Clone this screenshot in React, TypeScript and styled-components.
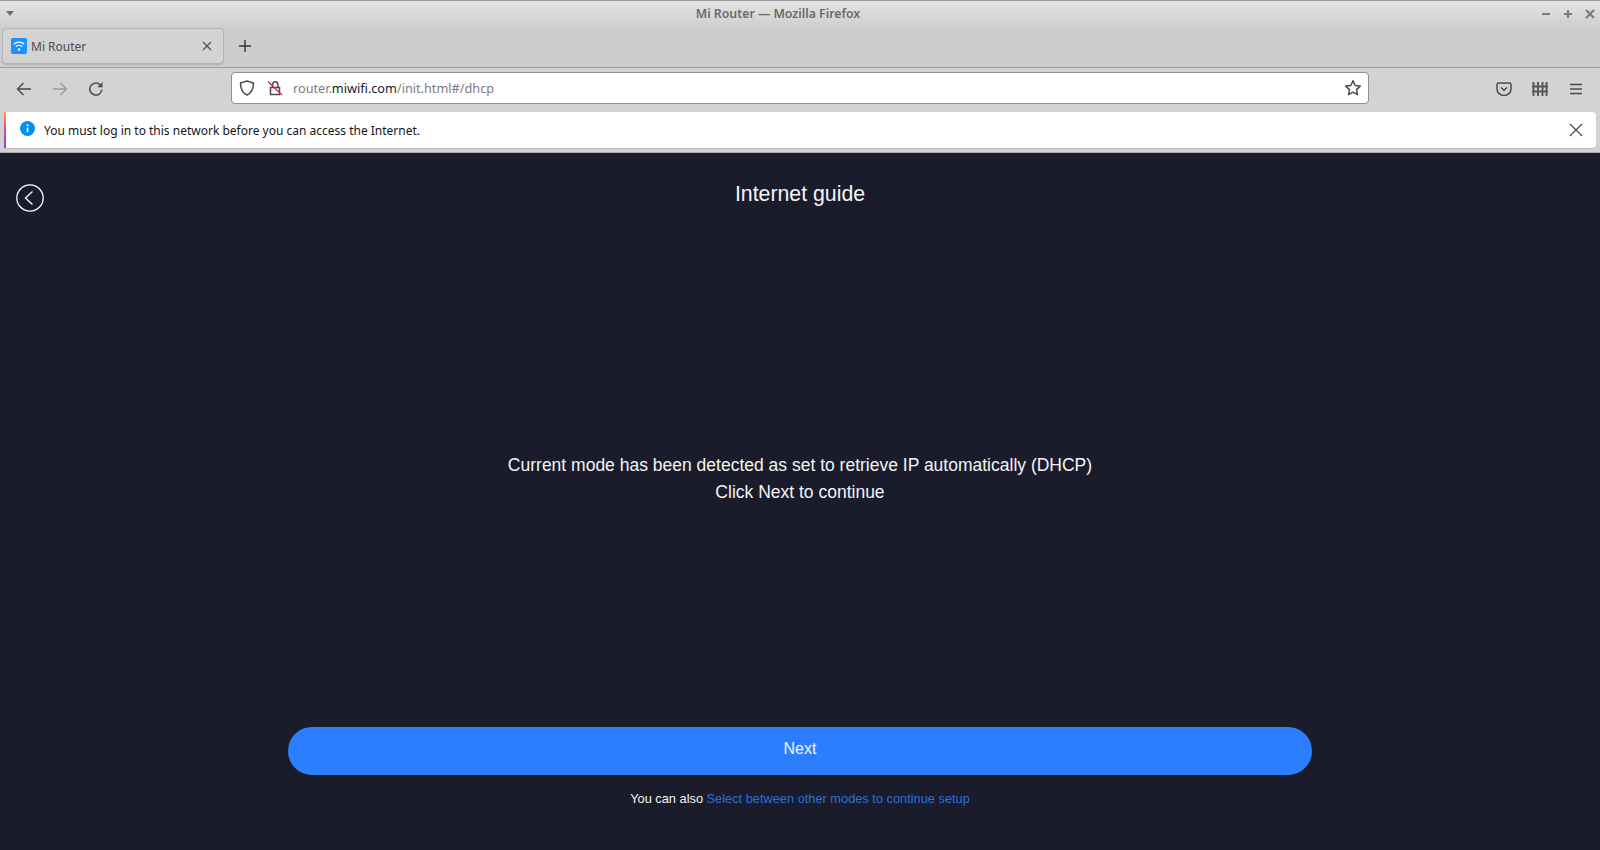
import React from "react";
import styled, { createGlobalStyle } from "styled-components";

const Global = createGlobalStyle`
  html, body { margin: 0; padding: 0; height: 100%; background: #1a1c2b; overflow: hidden; }
  #root { height: 100%; }
  * { box-sizing: border-box; }
`;

const Shell = styled.div`
  width: 1600px; height: 850px; display: flex; flex-direction: column;
  font-family: "Noto Sans", sans-serif;
`;

const TitleBar = styled.div`
  height: 27px; flex: none; display: flex; align-items: center; justify-content: space-between;
  padding: 0 3px 0 5px; border-top: 1px solid #9c9c9c;
  background: linear-gradient(#e4e4e4, #cfcfcf);
  position: relative;
`;
const TitleText = styled.div`
  position: absolute; left: 0; right: 44px; top: 4px; text-align: center;
  font-size: 12.3px; line-height: 18px; font-weight: 600; color: #6a6a6a;
`;
const WindowButtons = styled.div`
  display: flex; gap: 8px; align-items: center; color: #6e6e6e;
`;

const TabStrip = styled.div`
  height: 41px; flex: none; display: flex; align-items: flex-start; padding: 1px 0 0 2px;
  background: #cdcdcd; border-bottom: 1px solid #9f9f9f;
`;
const Tab = styled.div`
  width: 222px; height: 36px; display: flex; align-items: center; gap: 4px;
  padding: 0 11px 0 8px; background: #d3d3d3; border: 1px solid #b4b4b4; border-radius: 4px;
  box-shadow: 0 1px 1px rgba(0,0,0,.12);
`;
const TabLabel = styled.span`
  flex: 1; font-size: 12px; color: #4a4a4f;
`;
const NewTab = styled.div`
  width: 40px; height: 36px; display: flex; align-items: center; justify-content: center;
  margin-left: 1px;
`;

const Toolbar = styled.div`
  height: 40px; flex: none; display: flex; align-items: center; background: #d3d3d3;
  padding: 0 0 0 6px;
`;
const NavButton = styled.div`
  width: 36px; height: 36px; margin-top: 2px; display: flex; align-items: center; justify-content: center;
`;
const UrlBar = styled.div`
  margin-left: 117px; width: 1138px; height: 32px; display: flex; align-items: center; background: #fff;
  border: 1px solid #8f8f8f; border-radius: 4px; padding: 0 6px 0 7px;
`;
const UrlIcons = styled.div`
  display: flex; align-items: center; gap: 12px; margin-right: 10px;
`;
const UrlText = styled.div`
  flex: 1; font-size: 12.7px; color: #7c7c80;
`;
const UrlHost = styled.span`
  color: #1b1b1f;
`;
const ToolbarRight = styled.div`
  margin-left: 117px; display: flex; align-items: center; gap: 0;
`;

const NoticeWrap = styled.div`
  height: 45px; flex: none; background: #d3d3d3; padding: 4px 4px 5px 4px;
  border-bottom: 1px solid #a8a8a8;
`;
const Notice = styled.div`
  height: 36px; display: flex; align-items: center; background: #fff; border-radius: 0 4px 4px 0;
  position: relative; padding: 0 13px 0 16px;
  box-shadow: 0 1px 1px rgba(0,0,0,.12);
`;
const Stripe = styled.span`
  position: absolute; left: 0; top: 0; bottom: 0; width: 2px;
  background: linear-gradient(#ff9a3c, #e0479e 50%, #7a4be0);
`;
const NoticeText = styled.span`
  flex: 1; font-size: 12px; color: #15141a; margin-left: 9px; padding-top: 1px;
`;

const Page = styled.main`
  flex: 1; position: relative; display: flex; flex-direction: column; align-items: center;
  background: #1a1c2b; color: #f4f4f4; font-family: "Liberation Sans", Arial, sans-serif;
`;
const BackButton = styled.div`
  position: absolute; left: 16px; top: 31px; width: 28px; height: 28px;
`;
const Heading = styled.h1`
  margin: 29px 0 0; font-size: 21.3px; line-height: 24px; font-weight: 400;
`;
const Message = styled.div`
  margin-top: 246px; text-align: center; font-size: 17.5px; line-height: 27px;
`;
const NextButton = styled.button`
  margin-top: 221px; width: 1024px; height: 48px; border: 0; border-radius: 24px;
  background: #2b7fff; color: #f4f4f4; font: 16px "Liberation Sans", Arial, sans-serif;
  padding: 0 0 4px;
`;
const Footnote = styled.div`
  margin-top: 16px; font-size: 12.8px; line-height: 16px;
`;
const FootLink = styled.a`
  color: #2a6fdc;
`;

const stroke = { fill: "none", stroke: "#4a4a4f", strokeWidth: 1.5 };

export default function App() {
  return (
    <Shell>
      <Global />
      <TitleBar>
        <svg width="10" height="6" viewBox="0 0 10 6"><path d="M1 0h8L5 5z" fill="#6e6e6e" /></svg>
        <TitleText>Mi Router — Mozilla Firefox</TitleText>
        <WindowButtons>
          <svg width="14" height="14" viewBox="0 0 14 14"><path d="M3 7h8" stroke="#7a7a7a" strokeWidth="2" /></svg>
          <svg width="14" height="14" viewBox="0 0 14 14"><path d="M3 7h8M7 3v8" stroke="#7a7a7a" strokeWidth="2" /></svg>
          <svg width="14" height="14" viewBox="0 0 14 14"><path d="M3 3l8 8M11 3l-8 8" stroke="#7a7a7a" strokeWidth="2" /></svg>
        </WindowButtons>
      </TitleBar>
      <TabStrip>
        <Tab>
          <svg width="16" height="16" viewBox="0 0 16 16">
            <rect width="16" height="16" rx="2" fill="#1e90ff" />
            <path d="M2.800 6.200a7.600 7.600 0 0 1 10.400 0M4.800 8.600a4.600 4.600 0 0 1 6.400 0" fill="none" stroke="#fff" strokeWidth="1.300" />
            <circle cx="8" cy="11.500" r="1.200" fill="#fff" />
          </svg>
          <TabLabel>Mi Router</TabLabel>
          <svg width="10" height="10" viewBox="0 0 10 10"><path d="M1 1l8 8M9 1l-8 8" stroke="#4a4a4f" strokeWidth="1.100" /></svg>
        </Tab>
        <NewTab>
          <svg width="14" height="14" viewBox="0 0 14 14"><path d="M7 1v12M1 7h12" stroke="#333" strokeWidth="1.400" /></svg>
        </NewTab>
      </TabStrip>
      <Toolbar>
        <NavButton>
          <svg width="16" height="16" viewBox="0 0 16 16"><path d="M15 8H1.500M7.500 2L1.500 8l6 6" {...stroke} /></svg>
        </NavButton>
        <NavButton>
          <svg width="16" height="16" viewBox="0 0 16 16"><path d="M1 8h13.500M8.500 2l6 6-6 6" {...stroke} stroke="#9d9d9f" /></svg>
        </NavButton>
        <NavButton>
          <svg width="16" height="16" viewBox="0 0 16 16">
            <path d="M13.800 8.500A6 6 0 1 1 11.800 3.600" {...stroke} />
            <path d="M14.500 1v5.200H9.300z" fill="#4a4a4f" />
          </svg>
        </NavButton>
        <UrlBar>
          <UrlIcons>
            <svg width="16" height="16" viewBox="0 0 16 16"><path d="M8 1l6.500 2c0 6-1.500 9.800-6.500 12C3 12.800 1.500 9 1.500 3z" {...stroke} /></svg>
            <svg width="16" height="16" viewBox="0 0 16 16">
              <path d="M3.500 7.500h9v7h-9zM5.500 7.500V4.500a2.700 2.700 0 0 1 5.400 0v3" {...stroke} />
              <path d="M1 1.500L15 15" stroke="#e22850" strokeWidth="1.400" />
            </svg>
          </UrlIcons>
          <UrlText>router.<UrlHost>miwifi.com</UrlHost>/init.html#/dhcp</UrlText>
          <svg width="18" height="18" viewBox="0 0 18 18"><path d="M9 1.800l2.200 4.700 5 .6-3.700 3.500 1 5.100L9 13.200l-4.500 2.500 1-5.100L1.800 7.100l5-.6z" {...stroke} strokeLinejoin="round" /></svg>
        </UrlBar>
        <ToolbarRight>
          <NavButton>
            <svg width="16" height="16" viewBox="0 0 16 16"><path d="M2.500 2h11A1.500 1.500 0 0 1 15 3.500V8a7 6.500 0 0 1-14 0V3.500A1.500 1.500 0 0 1 2.500 2zM5 6.500l3 2.800 3-2.800" {...stroke} /></svg>
          </NavButton>
          <NavButton>
            <svg width="16" height="14" viewBox="0 0 16 14"><path d="M1.500 0v14M6 0v14M10.500 0v14M14.500 0v14M0 4.500h16M0 9.500h16" fill="none" stroke="#58585c" strokeWidth="2" /></svg>
          </NavButton>
          <NavButton>
            <svg width="14" height="12" viewBox="0 0 14 12"><path d="M1 1.500h12M1 6h12M1 10.500h12" fill="none" stroke="#4a4a4f" strokeWidth="1.300" /></svg>
          </NavButton>
        </ToolbarRight>
      </Toolbar>
      <NoticeWrap>
        <Notice>
          <Stripe />
          <svg width="15" height="15" viewBox="0 0 16 16" style={{ marginTop: -4 }}>
            <circle cx="8" cy="8" r="8" fill="#0090ed" />
            <path d="M8 7v5" stroke="#fff" strokeWidth="1.800" />
            <circle cx="8" cy="4.500" r="1.100" fill="#fff" />
          </svg>
          <NoticeText>You must log in to this network before you can access the Internet.</NoticeText>
          <svg width="14" height="14" viewBox="0 0 14 14"><path d="M1 1l12 12M13 1L1 13" stroke="#4a4a4f" strokeWidth="1.200" /></svg>
        </Notice>
      </NoticeWrap>
      <Page>
        <BackButton>
          <svg width="28" height="28" viewBox="0 0 28 28" fill="none" stroke="#fff" strokeWidth="1.300">
            <circle cx="14" cy="14" r="13.200" />
            <path d="M16.500 7.500L9.500 14l7 6.500" />
          </svg>
        </BackButton>
        <Heading>Internet guide</Heading>
        <Message>
          Current mode has been detected as set to retrieve IP automatically (DHCP)
          <br />
          Click Next to continue
        </Message>
        <NextButton>Next</NextButton>
        <Footnote>You can also <FootLink>Select between other modes to continue setup</FootLink></Footnote>
      </Page>
    </Shell>
  );
}
